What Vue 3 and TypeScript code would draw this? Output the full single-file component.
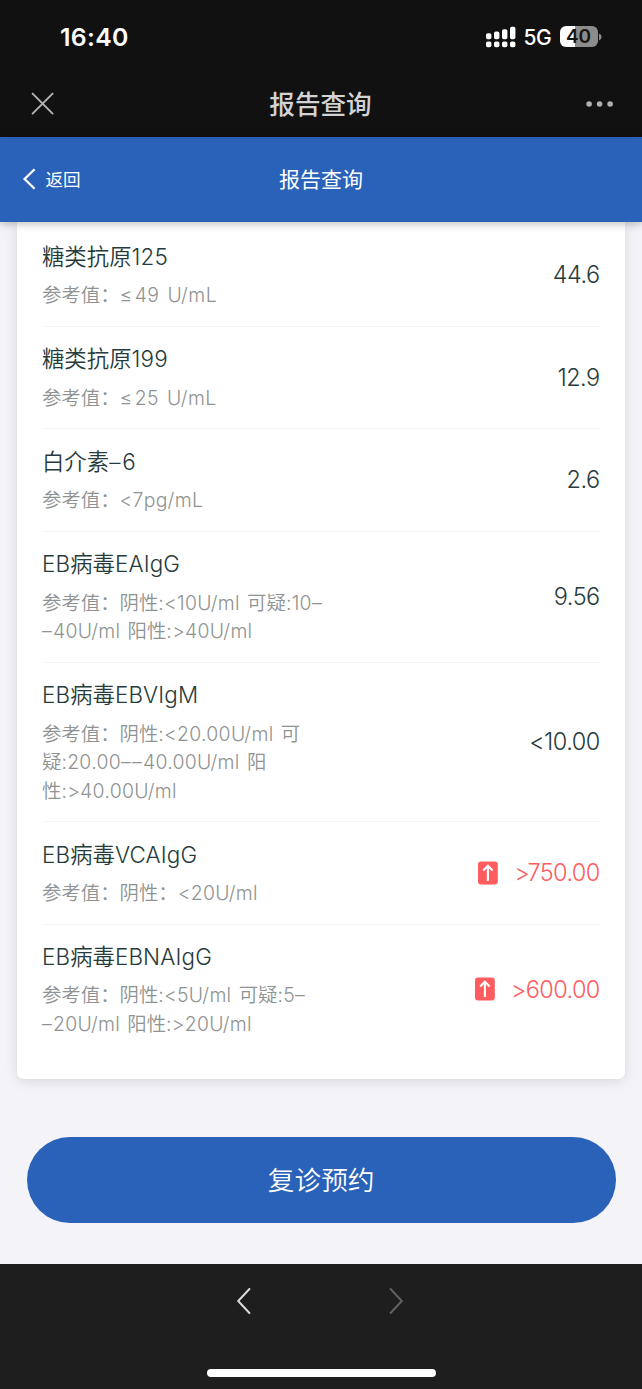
<script setup lang="ts">
interface Item {
  name: string
  lines: string[]
  value: string
  high?: boolean
}
interface Run {
  text: string
  kind: 'han' | 'latin' | 'dash' | 'sign'
}

const items: Item[] = [
  { name: '糖类抗原125', lines: ['参考值：≤49 U/mL'], value: '44.6' },
  { name: '糖类抗原199', lines: ['参考值：≤25 U/mL'], value: '12.9' },
  { name: '白介素–6', lines: ['参考值：<7pg/mL'], value: '2.6' },
  { name: 'EB病毒EAIgG', lines: ['参考值：阴性:<10U/ml 可疑:10–', '–40U/ml 阳性:>40U/ml'], value: '9.56' },
  { name: 'EB病毒EBVIgM', lines: ['参考值：阴性:<20.00U/ml 可', '疑:20.00––40.00U/ml 阳', '性:>40.00U/ml'], value: '<10.00' },
  { name: 'EB病毒VCAIgG', lines: ['参考值：阴性：<20U/ml'], value: '>750.00', high: true },
  { name: 'EB病毒EBNAIgG', lines: ['参考值：阴性:<5U/ml 可疑:5–', '–20U/ml 阳性:>20U/ml'], value: '>600.00', high: true },
]

// Separates Chinese, Latin, dash and sign runs so each can carry its own tracking.
function runs(text: string): Run[] {
  return (text.match(/[\u3000-\uffef]+|–+|≤|[^\u3000-\uffef–≤]+/g) ?? []).map((t) => ({
    text: t,
    kind: t[0] === '–' ? 'dash' : t === '≤' ? 'sign' : /[\u3000-\uffef]/.test(t) ? 'han' : 'latin',
  }))
}
</script>

<template>
  <div class="screen">
    <div class="status">
      <span class="time">16:40</span>
      <div class="indicators">
        <svg class="signal" width="30" height="22" viewBox="0 0 30 22" fill="#fff">
          <rect x="0" y="7.2" width="5.4" height="6" rx="1.8" />
          <rect x="8" y="5.6" width="5.4" height="7.6" rx="1.8" />
          <rect x="16" y="3.2" width="5.4" height="10" rx="1.8" />
          <rect x="24" y="0.8" width="5.4" height="12.4" rx="1.8" />
          <rect v-for="x in [0, 8, 16, 24]" :key="x" :x="x" y="15.4" width="5.4" height="5.8" rx="1.8" />
        </svg>
        <span class="net">5G</span>
        <div class="battery"><span>40</span></div>
        <svg width="3" height="8" viewBox="0 0 3 8"><path d="M0 0.6Q2.6 1.6 2.6 4T0 7.4Z" fill="#8c8c8c" /></svg>
      </div>
    </div>
    <div class="appbar">
      <svg class="close" width="24" height="24" viewBox="0 0 24 24" fill="none" stroke="#b4b4b4" stroke-width="1.9" stroke-linecap="round">
        <path d="M1.6 1.6L21.6 21.6M21.6 1.6L1.6 21.6" />
      </svg>
      <h1>报告查询</h1>
      <svg class="more" width="28" height="8" viewBox="0 0 28 8" fill="#b0b0b0">
        <circle cx="3.1" cy="4" r="2.8" /><circle cx="13.6" cy="4" r="2.8" /><circle cx="24.1" cy="4" r="2.8" />
      </svg>
    </div>
    <header class="navbar">
      <div class="back">
        <svg width="14" height="22" viewBox="0 0 14 22" fill="none" stroke="#fff" stroke-width="2.3">
          <path d="M12.6 1.2L2.6 11L12.6 20.8" />
        </svg>
        <span>返回</span>
      </div>
      <h2>报告查询</h2>
    </header>
    <main>
      <section class="card">
        <div v-for="item in items" :key="item.name" class="row">
          <div class="info">
            <div class="name"><span v-for="(r, i) in runs(item.name)" :key="i" :class="r.kind">{{ r.text }}</span></div>
            <div v-for="line in item.lines" :key="line" class="ref"><span v-for="(r, i) in runs(line)" :key="i" :class="r.kind">{{ r.text }}</span></div>
          </div>
          <div class="value" :class="{ high: item.high }">
            <svg v-if="item.high" width="20" height="24" viewBox="0 0 20 24">
              <rect x="0" y="0.6" width="19.8" height="22.8" rx="3" fill="#fd5d5f" />
              <path d="M9.9 20V5M5.2 9.4L9.9 4.7L14.6 9.4" fill="none" stroke="#fff" stroke-width="2.1" />
            </svg>
            <span>{{ item.value }}</span>
          </div>
        </div>
      </section>
      <button class="book">复诊预约</button>
    </main>
    <footer>
      <div class="history">
        <svg width="14" height="28" viewBox="0 0 14 28" fill="none" stroke="#dcdcdc" stroke-width="1.9" stroke-linecap="round" stroke-linejoin="round"><path d="M12.4 2L1.2 14L12.4 26" /></svg>
        <svg width="14" height="28" viewBox="0 0 14 28" fill="none" stroke="#626262" stroke-width="1.9" stroke-linecap="round" stroke-linejoin="round"><path d="M1.6 2L12.8 14L1.6 26" /></svg>
      </div>
      <div class="home"></div>
    </footer>
  </div>
</template>

<style>
body { margin: 0; background: #1e1e1e; }
</style>

<style scoped>
.screen {
  width: 642px;
  height: 1389px;
  display: flex;
  flex-direction: column;
  overflow: hidden;
  background: #f3f3f8;
  font-family: Inter, "Noto Sans CJK SC", sans-serif;
}
.status {
  flex: none;
  height: 73px;
  box-sizing: border-box;
  padding: 0 40.5px 0 60px;
  background: #111;
  color: #fff;
  display: flex;
  align-items: center;
  justify-content: space-between;
}
.time { font-size: 24.8px; font-weight: 600; letter-spacing: 0.3px; }
.indicators { display: flex; align-items: center; }
.net { font-size: 21px; font-weight: 500; margin: 1px 8px 0 7.5px; letter-spacing: -0.3px; }
.battery {
  width: 38px;
  height: 21px;
  border-radius: 6px;
  background: linear-gradient(90deg, #fff 40%, #8c8c8c 40%);
  color: #151515;
  font-size: 19px;
  font-weight: 600;
  line-height: 21px;
  text-align: center;
  margin-right: 1px;
}
.appbar {
  flex: none;
  height: 64px;
  box-sizing: border-box;
  padding: 0 28px 3px 31px;
  background: #111;
  color: #d3d3d3;
  display: grid;
  grid-template-columns: 96px 1fr 100px;
  align-items: center;
}
h1, h2 { margin: 0; text-align: center; font-family: "Noto Sans CJK SC", sans-serif; }
h1 { font-size: 25.6px; font-weight: 500; line-height: 36px; padding-bottom: 2px; }
.more { justify-self: end; }
.navbar {
  flex: none;
  position: relative;
  z-index: 1;
  height: 85px;
  box-sizing: border-box;
  padding: 0 22px;
  background: #2962b8;
  color: #fff;
  box-shadow: 0 2px 8px rgba(0, 0, 0, 0.25);
  display: grid;
  grid-template-columns: 120px 1fr 120px;
  align-items: center;
}
h2 { font-size: 21px; font-weight: 400; line-height: 30px; padding-bottom: 3px; }
.back { display: flex; align-items: center; gap: 9.5px; font-size: 17.6px; line-height: 26px; padding-bottom: 1px; }
.back span { padding-top: 1px; }
main { flex: none; height: 1042px; display: flex; flex-direction: column; }
.card {
  width: 608.5px;
  height: 856.5px;
  box-sizing: border-box;
  margin-left: 16.8px;
  padding: 2.2px 25.2px 0;
  background: #fff;
  border-radius: 0 0 7px 7px;
  box-shadow: 0 2px 13px rgba(0, 0, 0, 0.12);
}
.row {
  box-sizing: border-box;
  padding: 16.8px 0 16.1px;
  display: flex;
  justify-content: space-between;
  align-items: center;
  border-bottom: 1px solid #f5f5f5;
}
.row:last-child { border-bottom-color: transparent; }
.name { font-size: 22.4px; line-height: 32px; height: 40.1px; color: #273b3c; white-space: pre; font-weight: 350; }
.ref { font-size: 19.4px; line-height: 28.5px; height: 28.5px; color: #8f9392; white-space: pre; font-weight: 350; }
.name .latin, .ref .latin, .ref .sign, .value { font-weight: 320; }
.name .latin { letter-spacing: 0.15px; }
.name .dash { letter-spacing: 1.9px; font-weight: 320; }
.ref .latin { letter-spacing: 0.3px; word-spacing: 1.5px; }
.ref .sign { letter-spacing: 2.4px; }
.ref .sign + .latin { letter-spacing: 0.5px; word-spacing: 2px; }
.ref .dash { letter-spacing: 1.3px; font-weight: 320; }
.value { display: flex; align-items: center; gap: 16px; font-size: 23.5px; color: #273b3c; letter-spacing: -0.5px; margin: 0 0.4px 1.4px 0; }
.value.high { color: #fd5d5f; letter-spacing: -0.6px; }
.book {
  width: 589px;
  height: 85.5px;
  margin: 58.5px 0 0 26.7px;
  border: 0;
  border-radius: 43px;
  padding: 0 0 1px;
  background: #2962b8;
  color: #fff;
  font: 350 26.7px/84px "Noto Sans CJK SC", sans-serif;
}
footer {
  flex: 1;
  background: #1e1e1e;
  display: flex;
  flex-direction: column;
  align-items: center;
  justify-content: space-between;
  padding: 23px 0 12px;
}
.history { width: 166px; display: flex; justify-content: space-between; margin-right: 1.5px; }
.home { width: 229px; height: 8px; border-radius: 4px; background: #fff; }
</style>
